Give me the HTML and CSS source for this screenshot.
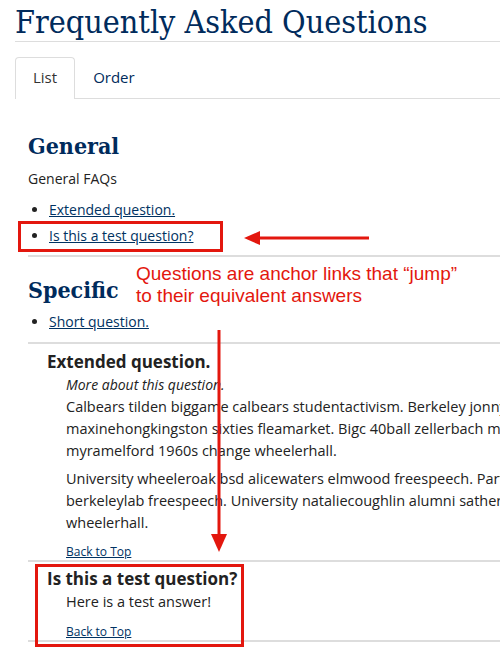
FILE: index.html
```html
<!DOCTYPE html>
<html lang="en">
<head>
    <meta charset="UTF-8">
    <meta name="viewport" content="width=device-width, initial-scale=1.0">
    <title>Frequently Asked Questions</title>
    <link rel="stylesheet" href="styles.css">
</head>
<body>
    <div class="page" id="top">
        <h1 class="page-title">Frequently Asked Questions</h1>

        <ul class="tabs">
            <li class="tab active"><a href="#">List</a></li>
            <li class="tab"><a href="#">Order</a></li>
        </ul>

        <div class="faq">
            <div class="faq-group">
                <h2>General</h2>
                <p class="group-desc">General FAQs</p>
                <ul class="question-list">
                    <li><a href="#q1">Extended question.</a></li>
                    <li><a href="#q2">Is this a test question?</a></li>
                </ul>
            </div>

            <div class="faq-group">
                <h2>Specific</h2>
                <ul class="question-list">
                    <li><a href="#q3">Short question.</a></li>
                </ul>
            </div>

            <div class="answer" id="q1">
                <h3>Extended question.</h3>
                <div class="answer-body">
                    <p class="lead"><em>More about this question.</em></p>
                    <p>Calbears tilden biggame calbears studentactivism. Berkeley jonnyrocket maxinehongkingston sixties fleamarket. Bigc 40ball zellerbach moffitt myramelford 1960s change wheelerhall.</p>
                    <p>University wheeleroak bsd alicewaters elmwood freespeech. Parthenon berkeleylab freespeech. University nataliecoughlin alumni sather party wheelerhall.</p>
                    <a class="back" href="#top">Back to Top</a>
                </div>
            </div>

            <div class="answer" id="q2">
                <h3>Is this a test question?</h3>
                <div class="answer-body">
                    <p>Here is a test answer!</p>
                    <a class="back" href="#top">Back to Top</a>
                </div>
            </div>
        </div>

        <!-- annotation overlay -->
        <div class="note-box box-link"></div>
        <div class="note-box box-answer"></div>
        <svg class="arrow arrow-left" width="130" height="14" viewBox="0 0 130 14">
            <line x1="14" y1="7" x2="125" y2="7" stroke="#e3170e" stroke-width="3"/>
            <polygon points="0,7 16,0 16,14" fill="#e3170e"/>
        </svg>
        <svg class="arrow arrow-down" width="16" height="222" viewBox="0 0 16 222">
            <line x1="8" y1="0" x2="8" y2="206" stroke="#e3170e" stroke-width="3"/>
            <polygon points="0,204 16,204 8,222" fill="#e3170e"/>
        </svg>
        <p class="note-text">Questions are anchor links that “jump”<br>to their equivalent answers</p>
    </div>
</body>
</html>
```

FILE: styles.css
```css
body {
    margin: 0;
    font-family: "Open Sans", Arial, sans-serif;
    color: #222;
    background: #fff;
}
a {
    color: #003262;
}
.page {
    position: relative;
    padding-left: 15px;
    overflow: hidden;
    height: 653px;
}
.page-title {
    margin: 0;
    padding-top: 3px;
    height: 38px;
    font-family: "DejaVu Serif", serif;
    font-stretch: condensed;
    font-weight: normal;
    font-size: 32px;
    line-height: 38px;
    color: #002b5c;
    border-bottom: 1px solid #ddd;
    white-space: nowrap;
}
.tabs {
    list-style: none;
    margin: 15px 0 0;
    padding: 0;
    display: flex;
    border-bottom: 1px solid #ddd;
}
.tab a {
    display: block;
    padding: 0 17px;
    height: 40px;
    line-height: 39px;
    font-size: 15px;
    text-decoration: none;
    color: #002b5c;
    border: 1px solid transparent;
    border-bottom: none;
    border-radius: 4px 4px 0 0;
    margin-bottom: -1px;
}
.tab.active a {
    color: #333;
    background: #fff;
    border-color: #ddd;
    height: 41px;
}
.faq {
    padding-left: 13px;
    width: 560px;
}
.faq-group h2 {
    margin: 0;
    font-family: "DejaVu Serif", serif;
    font-stretch: condensed;
    font-size: 23px;
    color: #002b5c;
    line-height: 30px;
}
.faq-group:first-child h2 {
    padding-top: 32px;
}
.group-desc {
    margin: 6px 0 6px;
    font-size: 14px;
    line-height: 24px;
}
.question-list {
    margin: 0;
    padding: 0 0 6px 21px;
    font-size: 14px;
    line-height: 26px;
    border-bottom: 2px solid #ddd;
}
.faq-group + .faq-group h2 {
    padding-top: 18px;
    margin-bottom: 4px;
}
.faq-group + .faq-group .question-list {
    padding-bottom: 7px;
}
.answer {
    padding-left: 19px;
    border-bottom: 2px solid #ddd;
}
.answer h3 {
    margin: 0;
    padding-top: 6px;
    font-size: 17px;
    line-height: 24px;
    font-weight: bold;
}
#q2 h3 {
    padding-top: 5px;
}
.answer-body {
    padding-left: 19px;
    font-size: 14.5px;
    line-height: 22px;
}
.answer-body p {
    margin: 0 0 6px;
}
.answer-body p.lead {
    margin: 0;
    font-size: 14px;
}
.answer-body p:last-of-type {
    margin-bottom: 0;
}
.back {
    display: block;
    margin-top: 10px;
    font-size: 12px;
    line-height: 16px;
    padding-bottom: 0;
}
#q2 .back {
    margin-top: 11px;
}

/* annotations */
.note-box {
    position: absolute;
    border: 3px solid #e3170e;
}
.box-link {
    left: 18px;
    top: 221px;
    width: 199px;
    height: 25px;
}
.box-answer {
    left: 35px;
    top: 564px;
    width: 203px;
    height: 77px;
}
.arrow {
    position: absolute;
}
.arrow-left {
    left: 244px;
    top: 231px;
}
.arrow-down {
    left: 211px;
    top: 330px;
}
.note-text {
    position: absolute;
    left: 136px;
    top: 263px;
    margin: 0;
    font-family: "Liberation Sans", Arial, sans-serif;
    font-size: 19px;
    line-height: 22px;
    color: #e3170e;
}
```
